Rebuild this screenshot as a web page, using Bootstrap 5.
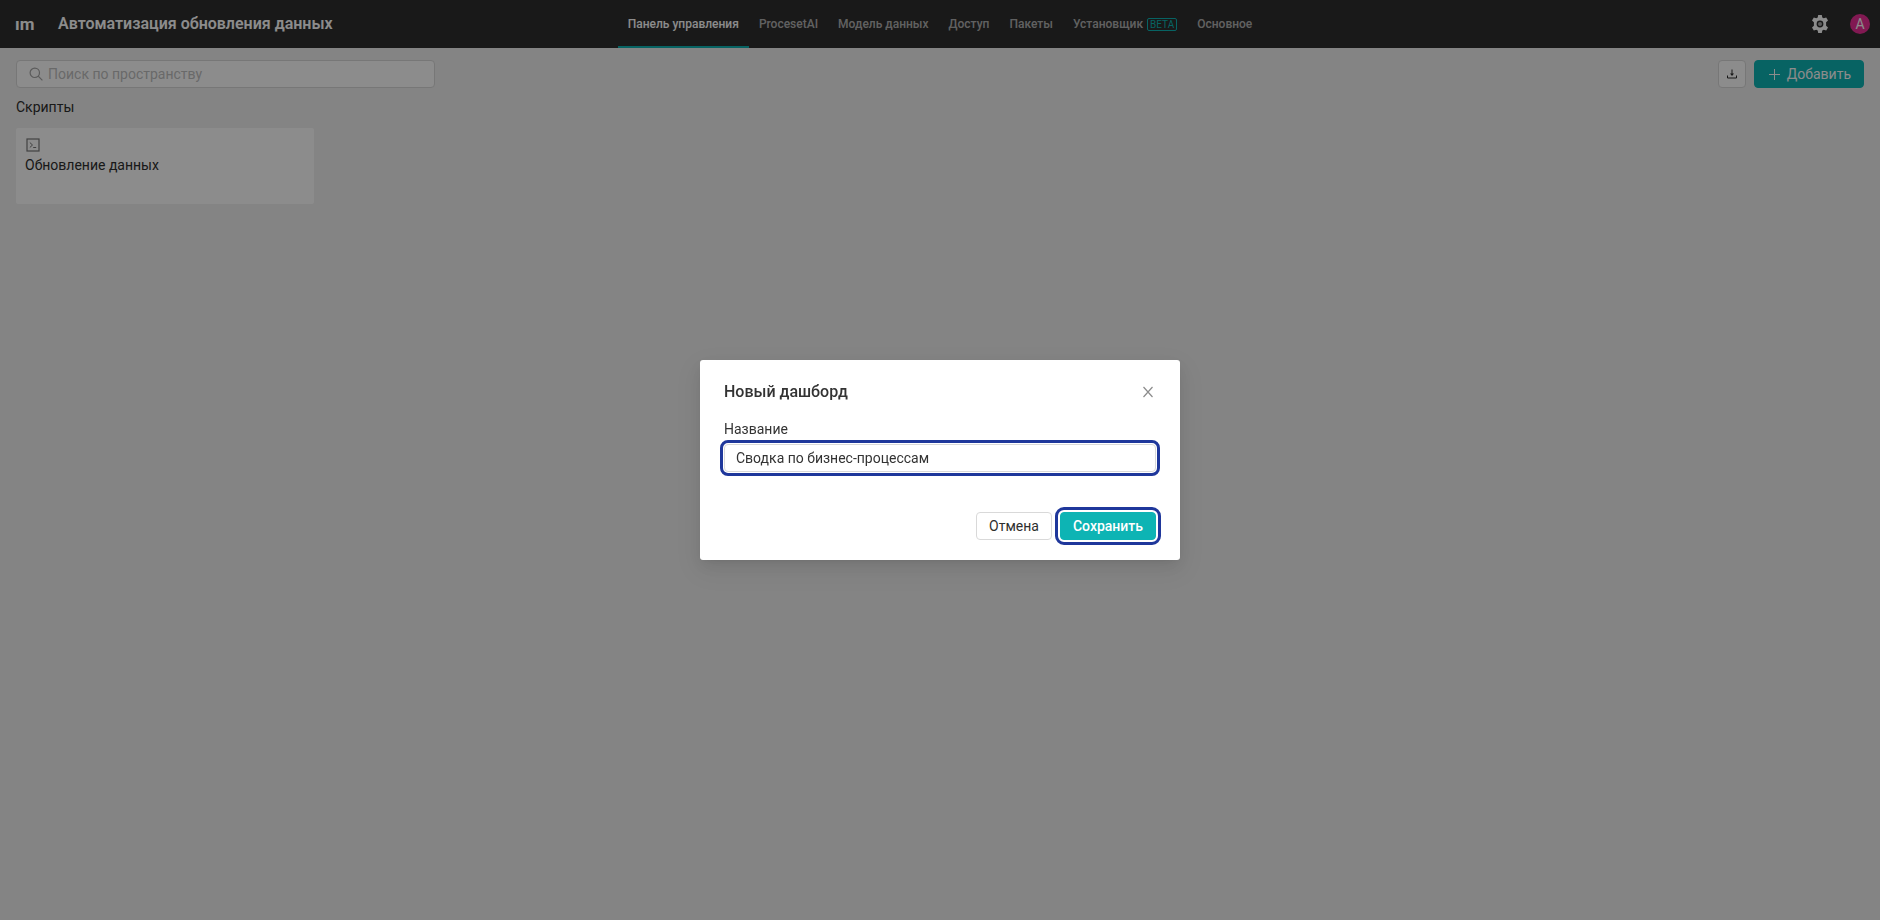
<!DOCTYPE html>
<html lang="ru">
<head>
<meta charset="utf-8">
<meta name="viewport" content="width=device-width, initial-scale=1">
<title>Автоматизация обновления данных</title>
<link rel="stylesheet" href="https://cdn.jsdelivr.net/npm/bootstrap@5.3.0/dist/css/bootstrap.min.css">
<style>
  :root { --accent: #0db4b4; --ring: #1f379b; --line: #d9d9d9; --ink: #2e2e2e; }
  body { font-family: Roboto, "Noto Sans", sans-serif; font-size: 14px; line-height: 22px; color: var(--ink); background: #f0f0f0; }
  .topbar { height: 48px; background: #2e2e2e; padding: 0 10px; }
  .side { flex: 1 1 0; min-width: 0; }
  .brand { font-size: 17px; font-weight: 700; color: #fff; width: 48px; padding-left: 5px; }
  .space-title { font-size: 16px; font-weight: 600; line-height: 24px; color: #fff; }
  .tabs .nav-link { display: flex; align-items: center; height: 48px; padding: 0 10px; font-size: 12px; font-weight: 500; color: rgba(255,255,255,.65); border-bottom: 2px solid transparent; border-top: 2px solid transparent; }
  .tabs .nav-link.active { color: #fff; border-bottom-color: var(--accent); }
  .beta { font-size: 10px; font-weight: 400; line-height: 11px; color: var(--accent); border: 1px solid var(--accent); border-radius: 2px; padding: 0 2px; margin-left: 4px; }
  .icon-btn { background: none; border: 0; padding: 0; }
  .avatar { width: 20px; height: 20px; border: 0; padding: 0; border-radius: 50%; background: #eb2f96; color: #fff; font-size: 14px; }
  .workspace { padding: 12px 16px; }
  .search { width: 419px; height: 28px; background: #fff; border: 1px solid var(--line); border-radius: 4px; padding: 0 12px; }
  .search svg { margin-right: 5px; }
  .search input { border: 0; outline: 0; background: none; line-height: 22px; padding: 0; color: var(--ink); }
  .search input::placeholder { color: #bfbfbf; opacity: 1; }
  .btn { --bs-btn-font-size: 14px; --bs-btn-line-height: 22px; --bs-btn-padding-y: 2px; --bs-btn-padding-x: 12px; --bs-btn-border-radius: 4px; }
  .btn-plain { --bs-btn-color: var(--ink); --bs-btn-bg: #fff; --bs-btn-border-color: var(--line); --bs-btn-hover-color: var(--accent); --bs-btn-hover-bg: #fff; --bs-btn-hover-border-color: var(--accent); }
  .btn-accent { --bs-btn-color: #fff; --bs-btn-bg: var(--accent); --bs-btn-border-color: var(--accent); --bs-btn-hover-color: #fff; --bs-btn-hover-bg: #0aa; --bs-btn-hover-border-color: #0aa; }
  .btn-accent svg { margin-right: 6px; }
  .btn-square { width: 28px; height: 28px; padding: 0; }
  .section-title { font-size: 14px; font-weight: 400; line-height: 22px; margin: 8px 0 10px; }
  .tiles { --bs-gutter-x: 12px; --bs-gutter-y: 12px; }
  .tile { height: 76px; border-radius: 2px; background: #fff; padding: 9px; color: var(--ink); }
  .tile svg { margin-bottom: 1px; }
  .modal-backdrop { --bs-backdrop-opacity: .45; }
  .modal { --bs-modal-width: 480px; }
  .modal-content { border: 0; border-radius: 3px; padding: 20px 24px; color: #333; box-shadow: 0 3px 6px -4px rgba(0,0,0,.12), 0 6px 16px rgba(0,0,0,.08), 0 9px 28px 8px rgba(0,0,0,.05); }
  .dialog-head { margin-bottom: 14px; }
  .modal-title { font-size: 16px; font-weight: 500; line-height: 24px; margin: 0; }
  .dialog-actions { margin-top: 40px; }
  .save { font-weight: 500; }
  .field { height: 28px; font-size: 14px; line-height: 22px; padding: 2px 11px; border-color: var(--line); border-radius: 4px; color: #333; }
  .ring { outline: 3px solid var(--ring); outline-offset: 1px; }
  .ring-wide { outline: 3px solid var(--ring); outline-offset: 2px; }
</style>
</head>
<body>
<header class="topbar d-flex align-items-center">
  <div class="side d-flex align-items-center">
    <span class="brand">ım</span>
    <h1 class="space-title m-0 text-nowrap">Автоматизация обновления данных</h1>
  </div>
  <nav class="nav tabs flex-nowrap text-nowrap">
    <a class="nav-link active" href="#" aria-current="page">Панель управления</a>
    <a class="nav-link" href="#">ProcesetAI</a>
    <a class="nav-link" href="#">Модель данных</a>
    <a class="nav-link" href="#">Доступ</a>
    <a class="nav-link" href="#">Пакеты</a>
    <a class="nav-link" href="#">Установщик<span class="beta">BETA</span></a>
    <a class="nav-link" href="#">Основное</a>
  </nav>
  <div class="side d-flex align-items-center justify-content-end gap-3">
    <button class="icon-btn d-flex px-1" type="button" aria-label="Настройки">
      <svg width="20" height="18" viewBox="-1 0 20 18" fill="#fff"><path d="M7.200 0h3.600l.5 2.500 1.400.8 2.500-.8 1.800 3.100-1.900 1.700v3.400l1.900 1.700-1.800 3.100-2.500-.8-1.400.8-.5 2.500H7.200l-.5-2.500-1.400-.8-2.500.8L1 12.400l1.900-1.700V7.300L1 5.600l1.800-3.100 2.500.8 1.400-.8z"/><circle cx="9" cy="9" r="2.700" fill="#aaa" stroke="#2e2e2e" stroke-width="1.400"/></svg>
    </button>
    <button class="avatar d-flex align-items-center justify-content-center" type="button">A</button>
  </div>
</header>

<main class="workspace">
  <div class="d-flex align-items-center gap-2">
    <label class="search d-flex align-items-center me-auto">
      <svg width="14" height="14" viewBox="0 0 14 14" fill="none" stroke="#a6a6a6" stroke-width="1.200"><circle cx="5.800" cy="5.800" r="4.700"/><path d="M9.200 9.200l4.200 4.200"/></svg>
      <input class="flex-grow-1" type="search" placeholder="Поиск по пространству" aria-label="Поиск по пространству">
    </label>
    <button class="btn btn-plain btn-square d-flex align-items-center justify-content-center" type="button" aria-label="Импорт">
      <svg width="10" height="10" viewBox="0 0 10 10" fill="none" stroke="#2e2e2e"><path d="M.5 6.500v2.500h9V6.500M5 .5v5"/><path d="M3 4.500h4L5 7z" fill="#2e2e2e" stroke="none"/></svg>
    </button>
    <button class="btn btn-accent d-flex align-items-center" type="button">
      <svg width="14" height="14" viewBox="0 0 14 14" stroke="#fff"><path d="M7.500 2v11M2 7.500h11"/></svg>
      Добавить
    </button>
  </div>

  <h2 class="section-title">Скрипты</h2>
  <div class="row row-cols-6 tiles">
    <div class="col">
      <a class="tile d-block text-decoration-none" href="#">
        <svg class="d-block" width="16" height="16" viewBox="0 0 16 16" fill="none" stroke="#777"><rect x="2" y="2" width="12" height="12" stroke-width="1.200"/><path d="M4.800 5.500L7.500 8l-2.700 2.500M8.200 10.500h3"/></svg>
        Обновление данных
      </a>
    </div>
  </div>
</main>

<div class="modal-backdrop show"></div>
<div class="modal d-block" role="dialog" aria-modal="true" aria-labelledby="dialogTitle">
  <div class="modal-dialog modal-dialog-centered">
    <form class="modal-content">
      <div class="dialog-head d-flex align-items-center justify-content-between">
        <h2 class="modal-title" id="dialogTitle">Новый дашборд</h2>
        <button class="icon-btn d-flex" type="button" aria-label="Закрыть">
          <svg width="16" height="16" viewBox="0 0 16 16" fill="none" stroke="#8c8c8c" stroke-width="1.200"><path d="M3.500 3l9 10M12.500 3l-9 10"/></svg>
        </button>
      </div>
      <label class="mb-1" for="boardName">Название</label>
      <input class="form-control field ring" id="boardName" type="text" value="Сводка по бизнес-процессам">
      <div class="dialog-actions d-flex justify-content-end gap-2">
        <button class="btn btn-plain" type="button">Отмена</button>
        <button class="btn btn-accent ring-wide save" type="submit">Сохранить</button>
      </div>
    </form>
  </div>
</div>
<script src="https://cdn.jsdelivr.net/npm/bootstrap@5.3.0/dist/js/bootstrap.bundle.min.js"></script>
</body>
</html>
